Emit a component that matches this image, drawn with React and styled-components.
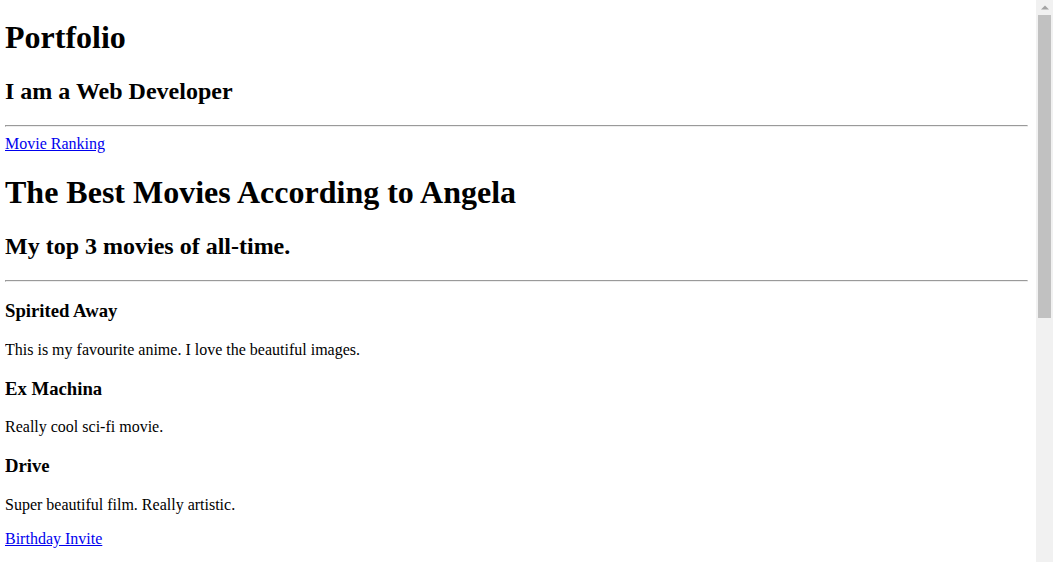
import React from "react";
import styled, { createGlobalStyle } from "styled-components";

const Global = createGlobalStyle`
  html { background: #fff; }
  html::-webkit-scrollbar { display: none; }
  body {
    margin: 0 25px 8px 5px;
    font-family: "Liberation Serif", "Times New Roman", serif;
    font-size: 16px;
    color: #000;
  }
`;

const Page = styled.main`
  display: block;
`;

const Title = styled.h1`
  font-size: 2em;
  font-weight: bold;
  margin: ${(p) => (p.$lead ? "19.44px 0 0.67em" : "0.67em 0")};
`;

const Subtitle = styled.h2`
  font-size: 1.5em;
  font-weight: bold;
  margin: 0.83em 0;
`;

const Rule = styled.hr`
  margin: 8px 0;
  border-style: solid;
  border-width: 1px;
  border-color: #9a9a9a #eeeeee #eeeeee #9a9a9a;
  height: 0;
`;

const NavLink = styled.a`
  color: #0000ee;
  text-decoration: underline;
  cursor: pointer;
`;

const NavLine = styled.div`
  line-height: normal;
`;

const ItemTitle = styled.h3`
  font-size: 1.17em;
  font-weight: bold;
  margin: 1em 0;
`;

const Text = styled.p`
  margin: 1em 0;
`;

const List = styled.ul`
  margin: 1em 0;
  padding-left: 40px;
`;

const ScrollTrack = styled.div`
  position: fixed;
  top: 0;
  right: 0;
  width: 17px;
  height: 100vh;
  background: #f1f1f1;
  display: flex;
  flex-direction: column;
  align-items: center;
`;

const ScrollArrow = styled.div`
  width: 17px;
  height: 15px;
  display: flex;
  align-items: center;
  justify-content: center;
`;

const ScrollThumb = styled.div`
  width: 13px;
  height: 303px;
  background: #c1c1c1;
`;

const movies = [
  { title: "Spirited Away", text: "This is my favourite anime. I love the beautiful images." },
  { title: "Ex Machina", text: "Really cool sci-fi movie." },
  { title: "Drive", text: "Super beautiful film. Really artistic." },
];

export default function App() {
  return (
    <Page>
      <Global />
      <Title $lead>Portfolio</Title>
      <Subtitle>I am a Web Developer</Subtitle>
      <Rule />
      <NavLine>
        <NavLink href="#movies">Movie Ranking</NavLink>
      </NavLine>
      <Title>The Best Movies According to Angela</Title>
      <Subtitle>My top 3 movies of all-time.</Subtitle>
      <Rule />
      {movies.map((m) => (
        <section key={m.title}>
          <ItemTitle>{m.title}</ItemTitle>
          <Text>{m.text}</Text>
        </section>
      ))}
      <NavLine>
        <NavLink href="#birthday">Birthday Invite</NavLink>
      </NavLine>
      <Title>It's My Birthday!</Title>
      <Subtitle>On the 12th May</Subtitle>
      <ItemTitle>What to bring:</ItemTitle>
      <List>
        <li>Balloons (I love balloons)</li>
        <li>Cake (I'm really good at eating)</li>
        <li>An appetite (There will be lots of food)</li>
      </List>
      <ItemTitle>This is where you need to go:</ItemTitle>
      <NavLine>
        <NavLink href="#map">Google map link</NavLink>
      </NavLine>
      <Rule />
      <Title>Contact Me</Title>
      <Text>Email: angela@example.com</Text>
      <Text>Thanks for visiting my portfolio.</Text>
      <ScrollTrack aria-hidden="true">
        <ScrollArrow>
          <svg width="8" height="5" viewBox="0 0 8 5">
            <path d="M0 4.5 L4 0.5 L8 4.5 Z" fill="#a3a3a3" />
          </svg>
        </ScrollArrow>
        <ScrollThumb />
      </ScrollTrack>
    </Page>
  );
}
